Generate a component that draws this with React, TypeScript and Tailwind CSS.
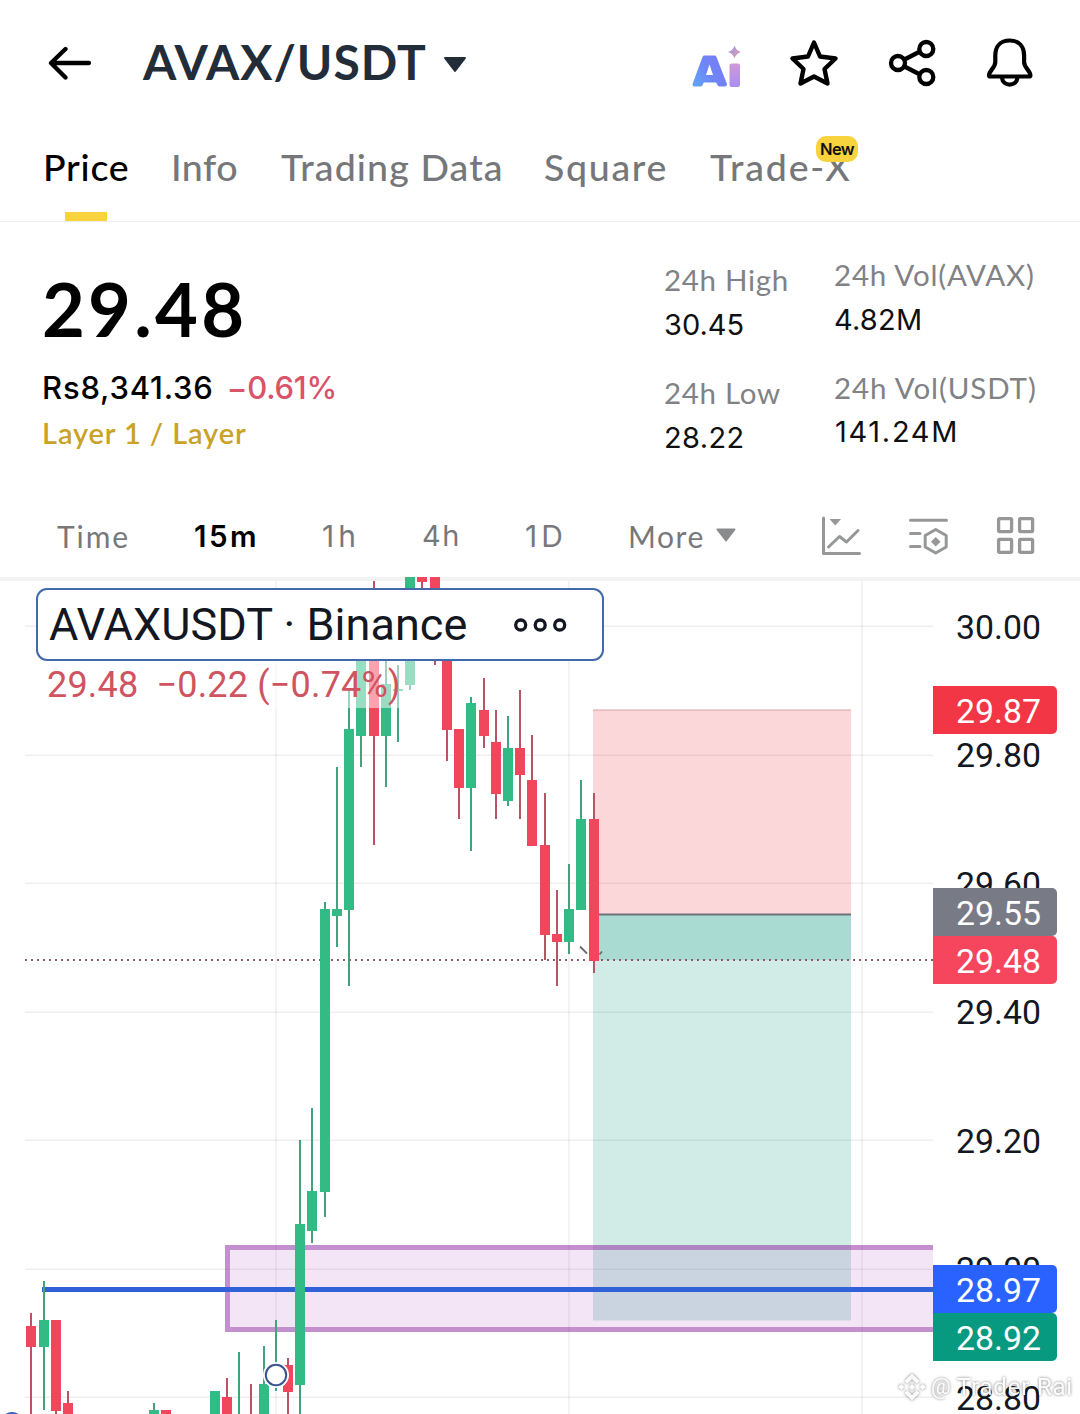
import React from "react";

type Candle = { x: number; up: boolean; body?: [number, number]; wick?: [number, number] };

const candles: Candle[] = [
  { x: 31, up: false, body: [1326, 1347], wick: [1313, 1414] },
  { x: 44, up: true, body: [1320, 1347], wick: [1281, 1410] },
  { x: 56, up: false, body: [1320, 1411], wick: [1320, 1414] },
  { x: 68, up: false, body: [1403, 1414], wick: [1391, 1414] },
  { x: 154, up: true, body: [1410, 1414], wick: [1403, 1414] },
  { x: 166, up: false, body: [1410, 1414] },
  { x: 215, up: true, body: [1391, 1414] },
  { x: 227, up: false, body: [1397, 1414], wick: [1378, 1414] },
  { x: 239, up: true, wick: [1352, 1414] },
  { x: 251, up: false, wick: [1384, 1414] },
  { x: 264, up: true, body: [1384, 1414], wick: [1346, 1414] },
  { x: 276, up: true, wick: [1320, 1391] },
  { x: 288, up: false, body: [1365, 1392], wick: [1358, 1414] },
  { x: 300, up: true, body: [1224, 1385], wick: [1140, 1414] },
  { x: 312, up: true, body: [1191, 1231], wick: [1108, 1243] },
  { x: 325, up: true, body: [909, 1192], wick: [902, 1217] },
  { x: 337, up: true, body: [909, 916], wick: [767, 947] },
  { x: 349, up: true, body: [729, 910], wick: [690, 986] },
  { x: 361, up: true, body: [640, 736], wick: [640, 767] },
  { x: 374, up: false, body: [640, 736], wick: [581, 845] },
  { x: 386, up: true, body: [684, 736], wick: [650, 787] },
  { x: 398, up: true, body: [689, 691], wick: [665, 742] },
  { x: 410, up: true, body: [577, 685], wick: [577, 690] },
  { x: 422, up: false, body: [577, 582], wick: [577, 600] },
  { x: 435, up: false, body: [577, 650], wick: [577, 665] },
  { x: 447, up: false, body: [640, 730], wick: [640, 761] },
  { x: 459, up: false, body: [729, 788], wick: [729, 819] },
  { x: 471, up: true, body: [703, 788], wick: [697, 851] },
  { x: 484, up: false, body: [710, 736], wick: [678, 748] },
  { x: 496, up: false, body: [742, 794], wick: [710, 819] },
  { x: 508, up: true, body: [748, 801], wick: [716, 806] },
  { x: 520, up: false, body: [748, 775], wick: [690, 819] },
  { x: 532, up: false, body: [780, 846], wick: [735, 846] },
  { x: 545, up: false, body: [845, 935], wick: [793, 960] },
  { x: 557, up: false, body: [934, 942], wick: [890, 986] },
  { x: 569, up: true, body: [909, 942], wick: [864, 954] },
  { x: 581, up: true, body: [819, 910], wick: [780, 910] },
  { x: 594, up: false, body: [819, 961], wick: [793, 973] },
];

const gridY = [626, 755, 883, 1012, 1140, 1269, 1397];
const gridX = [276, 569, 862];
const axis: [string, number][] = [
  ["30.00", 639], ["29.80", 767], ["29.60", 896], ["29.40", 1024], ["29.20", 1153], ["29.00", 1281], ["28.80", 1410],
];
const tags = [
  { label: "29.87", y: 686, fill: "#f23645" },
  { label: "29.55", y: 888, fill: "#787b86" },
  { label: "29.48", y: 936, fill: "#f6465d" },
  { label: "28.97", y: 1265, fill: "#2962ff" },
  { label: "28.92", y: 1313, fill: "#089981" },
];

function Chart() {
  return (
    <svg className="block" width="1080" height="837" viewBox="0 577 1080 837">
      <rect x="0" y="577" width="1080" height="4" fill="#f3f3f3" />
      <g stroke="#000" strokeOpacity="0.065" strokeWidth="1.5">
        {gridY.map((y) => <line key={y} x1="25" x2="933" y1={y + 0.3} y2={y + 0.3} />)}
        {gridX.map((x) => <line key={x} x1={x} x2={x} y1="581" y2="1414" />)}
      </g>
      <rect x="593" y="710" width="258" height="204" fill="#f23645" fillOpacity="0.2" />
      <line x1="593" x2="851" y1="710" y2="710" stroke="#d9a0a5" strokeWidth="1" />
      <rect x="593" y="915" width="258" height="405.5" fill="#089981" fillOpacity="0.19" />
      <rect x="593" y="915" width="258" height="45" fill="#089981" fillOpacity="0.2" />
      <line x1="593" x2="851" y1="914.5" y2="914.5" stroke="#6d7379" strokeWidth="2" />
      <rect x="225" y="1245" width="708" height="87" fill="#9c27b0" fillOpacity="0.12" />
      <path d="M933 1247.5H227.5V1329.5H933" fill="none" stroke="#8e2aa0" strokeOpacity="0.46" strokeWidth="5" />
      <line x1="42" x2="933" y1="1289.5" y2="1289.5" stroke="#3061d8" strokeWidth="5" />
      <line x1="25" x2="933" y1="960" y2="960" stroke="#8f5a66" strokeWidth="2" strokeDasharray="2 4" />
      {candles.map((c) => (
        <g key={c.x}>
          {c.wick && <rect x={c.x - 1} y={c.wick[0]} width="2" height={c.wick[1] - c.wick[0]} fill={c.up ? "#3fa37d" : "#b85464"} />}
          {c.body && <rect x={c.x - 5} y={c.body[0]} width="10" height={c.body[1] - c.body[0]} fill={c.up ? "#33bb85" : "#f0475d"} />}
        </g>
      ))}
      <path d="M580 946.5L587 953.5M599.5 954.5L602 951.5" stroke="#6b6b70" strokeWidth="1.8" />
      <rect x="40" y="661" width="378" height="47" fill="#fff" fillOpacity="0.5" />
      <circle cx="276" cy="1375" r="13" fill="#fff" />
      <circle cx="276" cy="1375" r="10.2" fill="#fff" stroke="#3b568f" strokeWidth="2" />
      <circle cx="12" cy="1423" r="11" fill="#3b5fb8" />
      <g fontFamily="Roboto, sans-serif" fontSize="33.8">
        {axis.map(([t, y]) => <text key={t} x="956" y={y} fill="#131722">{t}</text>)}
        {tags.map((t) => (
          <g key={t.label}>
            <path d={`M933 ${t.y}H1052a5 5 0 0 1 5 5V${t.y + 43}a5 5 0 0 1 -5 5H933Z`} fill={t.fill} />
            <text x="956" y={t.y + 37} fill="#fff">{t.label}</text>
          </g>
        ))}
      </g>
    </svg>
  );
}

function AiIcon() {
  return (
    <svg width="52" height="46" viewBox="690 44 52 46">
      <defs>
        <linearGradient id="aiA" x1="692" y1="84" x2="728" y2="62" gradientUnits="userSpaceOnUse">
          <stop offset="0" stopColor="#5fa8f7" /><stop offset="0.45" stopColor="#6d86f8" /><stop offset="1" stopColor="#7b7af5" />
        </linearGradient>
        <linearGradient id="aiI" x1="0" y1="63" x2="0" y2="88" gradientUnits="userSpaceOnUse">
          <stop offset="0" stopColor="#d09ad6" /><stop offset="1" stopColor="#a98cf5" />
        </linearGradient>
        <linearGradient id="aiStar" x1="729" y1="46" x2="740" y2="58" gradientUnits="userSpaceOnUse">
          <stop offset="0" stopColor="#9f94e6" /><stop offset="1" stopColor="#dba0ae" />
        </linearGradient>
      </defs>
      <path fill="url(#aiA)" stroke="url(#aiA)" strokeWidth="4" strokeLinejoin="round" d="M704.500 57.500H714.500L725 84.500H719.500L717.500 80.500H702.500L700.500 84.500H694.500Z" />
      <path fill="#fff" d="M709.500 64.500L713 75H706Z" />
      <rect x="729.5" y="63.5" width="10.5" height="23.5" rx="2" fill="url(#aiI)" />
      <path d="M734.500 45.500q1.500 5 6.500 6.500q-5 1.500-6.500 6.500q-1.500-5-6.500-6.500q5-1.500 6.500-6.500Z" fill="url(#aiStar)" />
    </svg>
  );
}

function StarIcon() {
  return (
    <svg width="52" height="52" viewBox="788 37 52 52" fill="none" stroke="#000" strokeWidth="4.4" strokeLinejoin="round">
      <path d="M814 42.500L820 56.500L835.500 58.500L824.500 69L827.500 83.500L814 76.500L800.500 83.500L803.500 69L792.500 58.500L808 56.500Z" />
    </svg>
  );
}

function ShareIcon() {
  return (
    <svg width="52" height="52" viewBox="886 37 52 52" fill="none" stroke="#000" strokeWidth="4.3">
      <circle cx="898" cy="63" r="7" /><circle cx="926.3" cy="49" r="7" /><circle cx="926.3" cy="77" r="7" />
      <path d="M904.500 59.500L920 51.500M904.500 66.500L920 74.500" />
    </svg>
  );
}

function BellIcon() {
  return (
    <svg width="52" height="54" viewBox="984 36 52 54" fill="none" stroke="#000" strokeWidth="4.2" strokeLinejoin="round">
      <path d="M1009.700 40.500C1000 40.500 995.300 47 995.300 55.500V62C995.300 68 989 70.500 989 75.500Q989 76.500 990.200 76.500H1029.200Q1030.400 76.500 1030.400 75.500C1030.400 70.500 1024.100 68 1024.100 62V55.500C1024.100 47 1019.400 40.500 1009.700 40.500Z" />
      <path d="M1002 78C1003 86.800 1016.400 86.800 1017.400 78" />
    </svg>
  );
}

function Header() {
  return (
    <header className="flex h-[126px] items-center pl-[48px]">
      <svg width="44" height="36" viewBox="48 45 44 36" fill="none" stroke="#000" strokeWidth="4.3" strokeLinecap="round" strokeLinejoin="round">
        <path d="M89 63H51M65.500 49L51 63L65.500 77.500" />
      </svg>
      <h1 className="-mt-[2px] ml-[51px] w-[284px] text-[48px] leading-[60px] font-bold tracking-[0.950px] whitespace-nowrap text-[#232d3a]">AVAX/USDT</h1>
      <svg className="mt-[3px] ml-[15px]" width="26" height="18" viewBox="0 0 26 18"><path d="M3 2H23L13 15Z" fill="#232d3a" stroke="#232d3a" strokeWidth="2" strokeLinejoin="round" /></svg>
      <div className="ml-auto flex items-center pr-[44px]">
        <div className="mt-[8px]"><AiIcon /></div>
        <div className="ml-[46px]"><StarIcon /></div>
        <div className="ml-[46px]"><ShareIcon /></div>
        <div className="ml-[46px]"><BellIcon /></div>
      </div>
    </header>
  );
}

function Tabs() {
  return (
    <nav className="flex h-[96px] border-b border-[#ededed] pl-[43px] text-[37.500px] leading-[82px] font-medium whitespace-nowrap text-[#76777a]">
      <div className="relative w-[128px] tracking-[0.750px] text-black">
        <span>Price</span>
        <i className="absolute bottom-0 left-[22px] h-[9px] w-[42px] bg-[#f8d33e]" />
      </div>
      <div className="w-[110px] tracking-[0.500px]">Info</div>
      <div className="w-[263px] tracking-[1.100px]">Trading Data</div>
      <div className="w-[166px] tracking-[1.700px]">Square</div>
      <div className="relative">
        <span className="tracking-[1.800px]">Trade-X</span>
        <b className="absolute top-[10px] left-[106px] flex h-[26px] w-[42px] items-center justify-center rounded-[10px] bg-[#f8d33e] font-[Inter] text-[16.500px] leading-none font-semibold tracking-[-0.600px] text-[#111]">New</b>
      </div>
    </nav>
  );
}

function Summary() {
  return (
    <section className="flex h-[273px] whitespace-nowrap">
      <div className="w-[622px] pl-[43px]">
        <div className="-ml-px mt-[45px] text-[74px] leading-[84px] font-bold tracking-[3.200px] text-black">29.48</div>
        <div className="mt-[14px] -ml-px flex font-[Inter] text-[31px] leading-[46px] font-medium">
          <span className="tracking-[0.800px] text-black">Rs8,341.36</span>
          <span className="ml-[13px] tracking-[-0.200px] text-[#d9536a]">−0.61%</span>
        </div>
        <div className="-mt-px -ml-px text-[29px] leading-[46px] font-semibold tracking-[0.900px] text-[#c9a227]">Layer 1 / Layer</div>
      </div>
      <div className="w-[170px] pt-[36px] pl-[42px] text-[29.500px] leading-[44.500px] text-[#818285]">
        <div className="tracking-[0.700px]">24h High</div>
        <div className="font-[Inter] text-[29px] text-[#101010]">30.45</div>
        <div className="mt-[24px] tracking-[0.700px]">24h Low</div>
        <div className="font-[Inter] text-[29px] tracking-[0.400px] text-[#101010]">28.22</div>
      </div>
      <div className="pt-[31px] pl-[42px] text-[29.500px] leading-[44.500px] text-[#818285]">
        <div className="tracking-[0.800px]">24h Vol(AVAX)</div>
        <div className="font-[Inter] text-[29px] tracking-[0.200px] text-[#101010]">4.82M</div>
        <div className="mt-[23.500px] tracking-[0.900px]">24h Vol(USDT)</div>
        <div className="pl-px font-[Inter] text-[29px] tracking-[1.700px] text-[#101010]">141.24M</div>
      </div>
    </section>
  );
}

function Toolbar() {
  return (
    <div className="flex h-[82px] items-center pl-[57px] font-[Inter] text-[29px] whitespace-nowrap text-[#77787a]">
      <div className="w-[137px] font-[Lato] text-[30px] tracking-[1.900px]">Time</div>
      <div className="w-[128px] text-[29.500px] font-semibold tracking-[2.500px] text-black">15m</div>
      <div className="w-[100px] text-[30px] tracking-[4px]">1h</div>
      <div className="w-[103px] tracking-[1.500px]">4h</div>
      <div className="w-[103px] text-[30px] tracking-[4px]">1D</div>
      <div className="w-[87px] font-[Lato] text-[30px] tracking-[1.600px]">More</div>
      <svg className="-mt-[3px]" width="22" height="16" viewBox="0 0 22 16"><path d="M2.500 2.500H19.500L11 13.500Z" fill="#8a8b8d" stroke="#8a8b8d" strokeWidth="2" strokeLinejoin="round" /></svg>
      <svg className="ml-[83px]" width="42" height="42" viewBox="820 515 42 42" fill="none" stroke="#969797" strokeWidth="3" strokeLinecap="round" strokeLinejoin="round">
        <path d="M823.500 518V553.500H859.500M828.500 547L839.500 536.500L846.500 542L858 530.500" />
        <path d="M829.500 519H841L835.300 525.500Z" fill="#969797" stroke="none" />
      </svg>
      <svg className="ml-[45px]" width="42" height="42" viewBox="907 515 42 42" fill="none" stroke="#969797" strokeWidth="3" strokeLinecap="round" strokeLinejoin="round">
        <path d="M910.500 520.300H946.500M910.500 533.500H920M910.500 546.500H920M935.700 529.500L946.200 535.500V547L935.700 553L925.200 547V535.500Z" />
        <path d="M935.700 537L940.500 541.700L935.700 546.500L931 541.700Z" fill="#969797" stroke="none" />
      </svg>
      <svg className="ml-[46px]" width="42" height="42" viewBox="995 515 42 42" fill="none" stroke="#969797" strokeWidth="3.3">
        <rect x="998.6" y="518.6" width="13" height="13" rx="1" /><rect x="1019.6" y="518.6" width="13" height="13" rx="1" />
        <rect x="998.6" y="539.3" width="13" height="13" rx="1" /><rect x="1019.6" y="539.3" width="13" height="13" rx="1" />
      </svg>
    </div>
  );
}

function Legend() {
  return (
    <div className="absolute top-[11px] left-[36px] w-[568px] font-[Roboto] whitespace-nowrap">
      <div className="flex h-[73px] items-center rounded-[11px] border-2 border-[#4169ab] bg-white pl-[11px] text-[45px] tracking-[0.050px] text-[#131722]">
        <span className="w-[418px]">AVAXUSDT · Binance</span>
        <svg className="ml-[45px]" width="56" height="16" viewBox="512 617 56 16" fill="none" stroke="#131722" strokeWidth="3.3">
          <circle cx="520.7" cy="625" r="5" /><circle cx="540.2" cy="625" r="5" /><circle cx="559.7" cy="625" r="5" />
        </svg>
      </div>
      <div className="mt-px flex pl-[11px] text-[36px] leading-[47px] tracking-[0.200px] text-[#cf5361]">
        <span>29.48</span>
        <span className="ml-[18px]">−0.22</span>
        <span className="ml-[9px]">(−0.74%)</span>
      </div>
    </div>
  );
}

function Watermark() {
  return (
    <div className="absolute right-[7px] bottom-[12px] flex items-center font-[Roboto] text-[24px] leading-[30px] whitespace-nowrap text-white/95 drop-shadow-[0_0_1.500px_rgba(0,0,0,0.550)]">
      <svg width="28" height="28" viewBox="0 0 28 28" fill="currentColor">
        <path d="M14 0.500L21.500 8L18.700 10.800L14 6.100L9.300 10.800L6.500 8ZM14 27.500L21.500 20L18.700 17.200L14 21.900L9.300 17.200L6.500 20ZM3.300 10.900L6.400 14L3.300 17.100L0.200 14ZM24.700 10.900L27.800 14L24.700 17.100L21.600 14ZM14 11L17 14L14 17L11 14Z" />
      </svg>
      <span className="ml-[5px] text-[22px]">@</span>
      <span className="ml-[6px] tracking-[0.800px]">Trader Rai</span>
    </div>
  );
}

export default function App() {
  return (
    <div className="h-[1414px] w-[1080px] overflow-hidden bg-white font-[Lato]">
      <Header />
      <Tabs />
      <Summary />
      <Toolbar />
      <div className="relative">
        <Chart />
        <Legend />
        <Watermark />
      </div>
    </div>
  );
}
